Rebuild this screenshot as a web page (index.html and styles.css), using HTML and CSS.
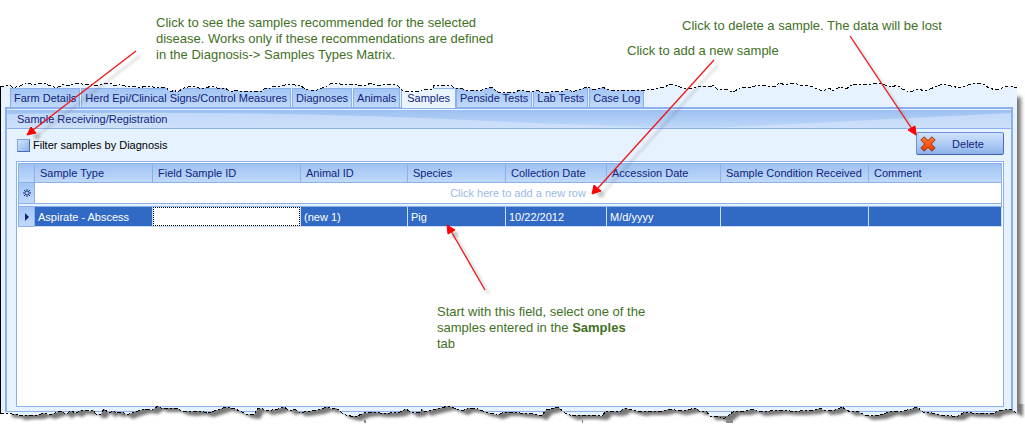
FILE: index.html
```html
<!DOCTYPE html>
<html lang="en">
<head>
<meta charset="utf-8">
<title>Samples</title>
<link rel="stylesheet" href="styles.css">
</head>
<body>
<main class="page">
  <section class="window">
    <nav class="tabs">
      <button class="tab" type="button">Farm Details</button>
      <button class="tab" type="button">Herd Epi/Clinical Signs/Control Measures</button>
      <button class="tab" type="button">Diagnoses</button>
      <button class="tab" type="button">Animals</button>
      <button class="tab tab-active" type="button">Samples</button>
      <button class="tab" type="button">Penside Tests</button>
      <button class="tab" type="button">Lab Tests</button>
      <button class="tab" type="button">Case Log</button>
    </nav>
    <div class="panel">
      <header class="panel-title">
        <svg class="swoosh" viewBox="0 0 1000 18" preserveAspectRatio="none" aria-hidden="true">
          <path d="M0 4Q250 0 460 10T720 17L1000 3V18H0Z" fill="#d7e6fb" opacity=".6"/>
        </svg>
        <h1 class="panel-heading">Sample Receiving/Registration</h1>
      </header>
      <div class="toolbar">
        <label class="filter"><input class="filter-box" type="checkbox">Filter samples by Diagnosis</label>
        <button class="delete" type="button">
          <svg class="delete-icon" viewBox="0 0 16 16" aria-hidden="true">
            <defs><linearGradient id="cross" x2="0" y2="1"><stop offset="0" stop-color="#ff7a2a"/><stop offset="1" stop-color="#ee3a00"/></linearGradient></defs>
            <path d="M4 .8L.8 4L4.600 8L.8 12L4 15.200L8 11.500L12 15.200L15.200 12L11.400 8L15.200 4L12 .8L8 4.500Z" fill="url(#cross)" stroke="#8e3519" stroke-width="1" stroke-linejoin="round"/>
          </svg>
          <span class="delete-label">Delete</span>
        </button>
      </div>
      <div class="grid">
        <table class="samples">
          <colgroup><col class="c-mark"><col class="c-type"><col class="c-field"><col class="c-animal"><col class="c-species"><col class="c-collected"><col class="c-accession"><col class="c-condition"><col class="c-comment"></colgroup>
          <thead>
            <tr><th></th><th>Sample Type</th><th>Field Sample ID</th><th>Animal ID</th><th>Species</th><th>Collection Date</th><th>Accession Date</th><th>Sample Condition Received</th><th>Comment</th></tr>
          </thead>
          <tbody>
            <tr class="new-row">
              <td class="mark"><svg class="mark-icon" viewBox="0 0 8 8" aria-hidden="true"><path d="M4 0V3M4 5V8M0 4H3M5 4H8M1 1L3 3M7 1L5 3M1 7L3 5M7 7L5 5" stroke="#10247b"/></svg></td>
              <td class="hint" colspan="8">Click here to add a new row</td>
            </tr>
            <tr class="divider"><td colspan="9"></td></tr>
            <tr class="selected">
              <td class="mark"><svg class="mark-icon" viewBox="0 0 8 8" aria-hidden="true"><path d="M2 0L6 4L2 8Z" fill="#10247b"/></svg></td>
              <td>Aspirate - Abscess</td>
              <td class="edit"><input class="edit-box" type="text" aria-label="Field Sample ID"></td>
              <td>(new 1)</td><td>Pig</td><td>10/22/2012</td><td>M/d/yyyy</td><td></td><td></td>
            </tr>
          </tbody>
        </table>
      </div>
    </div>
  </section>

  <svg class="tear tear-top" viewBox="0 80 1025 16" preserveAspectRatio="none" aria-hidden="true">
    <path fill="#fff" d="M0 80V86L6 86 10 85 12 87 16 87 20 86 27 83 31 84 35 85 40 83 44 83 48 85 54 87 58 87 61 86 64 84 68 86 74 84 80 83 84 85 92 84 97 86 102 84 106 83 110 83 115 86 120 84 125 86 130 86 136 87 140 88 145 86 150 86 156 88 160 87 165 87 171 92 174 90 177 92 184 88 188 87 195 86 199 88 205 88 212 86 217 88 225 88 231 92 234 90 240 91 262 91 265 88 270 88 275 86 280 86 285 85 290 84 295 85 300 85 305 89 311 90 317 90 325 87 330 84 336 83 340 84 345 85 355 84 360 86 366 85 371 83 375 85 382 85 393 84 398 86 403 91 413 92 420 91 424 89 433 89 434 85 443 86 450 85 455 88 460 88 468 91 475 90 480 91 487 88 491 87 495 90 500 93 515 92 520 90 531 92 537 90 541 92 548 93 552 91 560 92 568 89 572 92 578 90 587 87 595 90 602 87 612 91 620 90 630 90 645 90 654 89 666 87 668 84 678 86 684 89 692 88 700 86 712 87 713 85 718 90 725 89 733 92 740 88 752 87 758 85 775 87 779 83 786 85 794 83 800 85 810 86 818 89 822 91 830 88 832 91 840 87 846 89 853 84 862 85 872 84 880 83 887 86 892 87 897 85 902 89 910 92 918 89 925 91 935 87 942 84 951 86 960 88 968 85 976 83 983 84 989 88 996 90 1002 88 1008 86 1017 88H1025V80Z"/>
    <path class="tear-line" d="M0 86L6 86 10 85 12 87 16 87 20 86 27 83 31 84 35 85 40 83 44 83 48 85 54 87 58 87 61 86 64 84 68 86 74 84 80 83 84 85 92 84 97 86 102 84 106 83 110 83 115 86 120 84 125 86 130 86 136 87 140 88 145 86 150 86 156 88 160 87 165 87 171 92 174 90 177 92 184 88 188 87 195 86 199 88 205 88 212 86 217 88 225 88 231 92 234 90 240 91 262 91 265 88 270 88 275 86 280 86 285 85 290 84 295 85 300 85 305 89 311 90 317 90 325 87 330 84 336 83 340 84 345 85 355 84 360 86 366 85 371 83 375 85 382 85 393 84 398 86 403 91 413 92 420 91 424 89 433 89 434 85 443 86 450 85 455 88 460 88 468 91 475 90 480 91 487 88 491 87 495 90 500 93 515 92 520 90 531 92 537 90 541 92 548 93 552 91 560 92 568 89 572 92 578 90 587 87 595 90 602 87 612 91 620 90 630 90 645 90 654 89 666 87 668 84 678 86 684 89 692 88 700 86 712 87 713 85 718 90 725 89 733 92 740 88 752 87 758 85 775 87 779 83 786 85 794 83 800 85 810 86 818 89 822 91 830 88 832 91 840 87 846 89 853 84 862 85 872 84 880 83 887 86 892 87 897 85 902 89 910 92 918 89 925 91 935 87 942 84 951 86 960 88 968 85 976 83 983 84 989 88 996 90 1002 88 1008 86 1017 88"/>
  </svg>

  <svg class="tear tear-bottom" viewBox="0 404 1025 24" preserveAspectRatio="none" aria-hidden="true">
    <defs>
      <path id="edge" d="M0 414L8 413 12 414 16 414 19 416 28 415 38 415 44 413 49 415 61 411 66 414 71 411 76 413 81 410 90 411 93 410 96 414 101 414 104 409 109 413 113 411 117 413 122 412 127 415 134 412 145 409 152 410 158 406 161 408 176 408 182 411 190 412 200 411 208 413 217 410 226 407 235 409 240 411 246 414 254 415 258 408 263 409 266 411 272 410 278 409 284 407 290 411 295 409 299 412 304 412 310 411 318 410 327 407 332 409 336 408 342 413 346 415 355 417 364 413 374 412 380 413 390 413 400 412 406 409 412 413 420 412 422 409 425 412 432 410 440 408 449 406 454 408 462 411 468 408 478 409 485 412 490 413 497 415 505 412 514 412 520 413 535 414 541 416 546 410 558 407 565 413 572 416 580 415 590 415 602 416 606 411 616 412 621 411 625 408 632 410 640 412 646 411 655 411 662 411 670 409 680 411 686 410 696 408 699 411 706 411 710 416 718 416 723 419 728 416 734 411 745 411 753 409 759 412 770 411 780 410 790 411 800 411 815 410 820 408 825 411 835 410 842 407 850 412 857 411 867 416 880 415 892 411 900 412 911 409 917 407 923 412 932 413 940 415 952 416 958 416 965 412 972 413 985 413 993 414 998 411 1010 409 1017 413"/>
      <path id="sheet" d="M6 390V413L12 414 16 414 19 416 28 415 38 415 44 413 49 415 61 411 66 414 71 411 76 413 81 410 90 411 93 410 96 414 101 414 104 409 109 413 113 411 117 413 122 412 127 415 134 412 145 409 152 410 158 406 161 408 176 408 182 411 190 412 200 411 208 413 217 410 226 407 235 409 240 411 246 414 254 415 258 408 263 409 266 411 272 410 278 409 284 407 290 411 295 409 299 412 304 412 310 411 318 410 327 407 332 409 336 408 342 413 346 415 355 417 364 413 374 412 380 413 390 413 400 412 406 409 412 413 420 412 422 409 425 412 432 410 440 408 449 406 454 408 462 411 468 408 478 409 485 412 490 413 497 415 505 412 514 412 520 413 535 414 541 416 546 410 558 407 565 413 572 416 580 415 590 415 602 416 606 411 616 412 621 411 625 408 632 410 640 412 646 411 655 411 662 411 670 409 680 411 686 410 696 408 699 411 706 411 710 416 718 416 723 419 728 416 734 411 745 411 753 409 759 412 770 411 780 410 790 411 800 411 815 410 820 408 825 411 835 410 842 407 850 412 857 411 867 416 880 415 892 411 900 412 911 409 917 407 923 412 932 413 940 415 952 416 958 416 965 412 972 413 985 413 993 414 998 411 1010 409 1017 413V390Z"/>
      <mask id="outside" maskUnits="userSpaceOnUse" x="0" y="404" width="1025" height="24">
        <rect y="404" width="1025" height="24" fill="#fff"/>
        <use href="#sheet" fill="#000"/>
        <rect y="404" width="7" height="10" fill="#000"/>
      </mask>
      <filter id="soft" x="-5%" y="-50%" width="110%" height="200%"><feGaussianBlur stdDeviation="1.500"/></filter>
    </defs>
    <g mask="url(#outside)">
      <rect y="404" width="1025" height="24" fill="#fff"/>
      <use href="#sheet" x="6" y="4" fill="#777" filter="url(#soft)"/>
      <path d="M0 422H1025V428H0Z" fill="#fff"/>
    </g>
    <path fill="#8a8a8a" d="M364 420h2v3h-2zM582 420h1v3h-1zM726 420h7v3h-7z"/>
    <use href="#edge" class="tear-line"/>
  </svg>

  <aside class="note note-filter">
    <p class="note-text">Click to see the samples recommended for the selected disease. Works only if these recommendations are defined in the Diagnosis-&gt; Samples Types Matrix.</p>
    <svg class="arrow arrow-filter" viewBox="26 50 118 94" aria-hidden="true">
      <g class="arrow-shadow"><path d="M140 56L37 136"/><circle cx="37" cy="136" r="2"/></g>
      <path class="arrow-line" d="M136 51L33 130"/><path class="arrow-head" d="M27 135L31 127 36 133Z"/>
    </svg>
  </aside>
  <aside class="note note-add">
    <p class="note-text">Click to add a new sample</p>
    <svg class="arrow arrow-add" viewBox="590 58 132 142" aria-hidden="true">
      <g class="arrow-shadow"><path d="M718 65L602 194"/><circle cx="601" cy="194" r="2"/></g>
      <path class="arrow-line" d="M714 60L598 188"/><path class="arrow-head" d="M592 194L594 185 601 191Z"/>
    </svg>
  </aside>
  <aside class="note note-delete">
    <p class="note-text">Click to delete a sample. The data will be lost</p>
    <svg class="arrow arrow-delete" viewBox="845 34 80 108" aria-hidden="true">
      <g class="arrow-shadow"><path d="M854 41L918 136"/></g>
      <path class="arrow-line" d="M850 36L912 129"/><path class="arrow-head" d="M916 135L908 130 915 126Z"/>
    </svg>
  </aside>
  <aside class="note note-field">
    <p class="note-text">Start with this field, select one of the samples entered in the <strong>Samples</strong><br>tab</p>
    <svg class="arrow arrow-field" viewBox="444 222 52 74" aria-hidden="true">
      <g class="arrow-shadow"><path d="M489 294L455 235"/><circle cx="455" cy="235" r="2"/></g>
      <path class="arrow-line" d="M485 290L451 231"/><path class="arrow-head" d="M447 225L455 230 448 234Z"/>
    </svg>
  </aside>
</main>
</body>
</html>
```

FILE: styles.css
```css
* { box-sizing: border-box; }

body {
  margin: 0;
  background: #fff;
  font: 11px/14px "Liberation Sans", Arial, sans-serif;
  color: #10247b;
}

button, input { font: inherit; color: inherit; }

.page {
  position: relative;
  display: flex;
  flex-direction: column;
  min-height: 100vh;
  padding: 80px 8px 12px 0;
  overflow: hidden;
}

.window {
  flex: 1;
  display: flex;
  flex-direction: column;
  padding: 8px 4px 4px 4px;
  border-left: 1px solid #000;
  background: #e6f2ff;
  box-shadow: 5px 16px 4px -1px #777;
}

.tabs {
  display: flex;
  padding-left: 5px;
}

.tab {
  height: 19px;
  margin-right: 1px;
  padding: 0 3px;
  border: 1px solid #8bb0ea;
  border-bottom: 0;
  background: linear-gradient(#a3c5f4, #c0d9fa);
  white-space: nowrap;
}

.tab-active {
  margin: 0 0 -1px;
  height: 20px;
  padding: 0 5px 2px;
  background: #eaf4ff;
  position: relative;
}

.panel {
  flex: 1;
  display: flex;
  flex-direction: column;
  border: 2px solid #8bb0ec;
  border-bottom-width: 1px;
  padding-top: 1px;
  background: #e6f2ff;
}

.panel-title {
  display: grid;
  height: 19px;
  border-bottom: 1px solid #8bb0ea;
  background: linear-gradient(#9cc0f1, #bfd8f9);
}

.swoosh, .panel-heading { grid-area: 1 / 1; }
.swoosh { width: 100%; height: 18px; }

.panel-heading {
  margin: 0;
  padding: 2px 10px;
  font-size: 11px;
  font-weight: normal;
}

.toolbar {
  display: flex;
  align-items: center;
  justify-content: space-between;
  padding: 3px 7px 6px 10px;
}

.filter {
  display: flex;
  align-items: center;
  gap: 3px;
  padding-top: 3px;
  color: #000;
}

.filter-box {
  appearance: none;
  width: 13px;
  height: 13px;
  margin: 0;
  border: 1px solid;
  border-color: #83a7dc #4b6cb0 #4b6cb0 #83a7dc;
  background: linear-gradient(135deg, #cfe5ff, #8fb4ea);
}

.delete {
  display: flex;
  align-items: center;
  width: 88px;
  height: 23px;
  padding: 0 3px;
  border: 1px solid #6c90d2;
  border-bottom-color: #3f62ad;
  border-right-color: #4c6fb8;
  border-radius: 2px;
  background: linear-gradient(#cfe2fb, #a9c8f4 60%, #8db2ea);
}

.delete-icon { width: 16px; height: 16px; }
.delete-label { flex: 1; text-align: center; }

.grid {
  flex: 1;
  margin: 0 7px 4px 9px;
  padding: 1px;
  border: 1px solid #8bb0ea;
  background: #fff;
}

.samples {
  width: 100%;
  table-layout: fixed;
  border-collapse: separate;
  border-spacing: 0;
  border-left: 1px solid #8bb0ea;
}

.c-mark { width: 16px; }
.c-type { width: 118px; }
.c-field { width: 148px; }
.c-animal { width: 107px; }
.c-species { width: 98px; }
.c-collected { width: 101px; }
.c-accession { width: 114px; }
.c-condition { width: 148px; }
.c-comment { width: 133px; }

.samples th {
  height: 20px;
  padding: 0 5px;
  border: solid #8bb0ea;
  border-width: 1px 1px 1px 0;
  background: linear-gradient(#9fc2f2, #c0d9fa);
  font-weight: normal;
  text-align: left;
  white-space: nowrap;
}

.samples td { padding: 0 3px; white-space: nowrap; }

.samples .mark {
  height: 20px;
  padding: 0;
  border-right: 1px solid #8bb0ea;
  border-bottom: 1px solid #8bb0ea;
  background: linear-gradient(#a3c5f4, #c0d9fa);
  text-align: center;
}

.mark-icon { display: block; width: 8px; height: 8px; margin: 0 auto; }

.samples .hint {
  height: 21px;
  border-right: 1px solid #8bb0ea;
  border-bottom: 1px solid #8bb0ea;
  color: #9cb9e8;
  text-align: center;
}

.samples .divider td {
  height: 3px;
  padding: 0;
  border: solid #8bb0ea;
  border-width: 0 1px 1px 0;
  background: #e6f2ff;
}

.selected td {
  height: 20px;
  border-right: 1px solid #c9dcf8;
  border-bottom: 1px solid #c9dcf8;
  background: #316ac5;
  color: #fff;
}

.samples .edit { padding: 0; }

.edit-box {
  display: block;
  width: 100%;
  height: 19px;
  padding: 0 3px;
  border: 1px dotted #000;
  border-radius: 0;
  background: #fff;
  color: #000;
}

.tear {
  position: absolute;
  left: 0;
  width: 100%;
  pointer-events: none;
}

.tear-top { top: 80px; height: 16px; }
.tear-bottom { bottom: 0; height: 24px; }

.tear-line {
  fill: none;
  stroke: #000;
  stroke-width: 1;
  stroke-dasharray: 4 2 2 2;
  shape-rendering: crispEdges;
}

.note {
  position: absolute;
  color: #42701f;
  font-size: 13px;
  line-height: 16px;
  pointer-events: none;
}

.note-text { margin: 0; }
.note-filter { left: 156px; top: 15px; width: 340px; }
.note-add { left: 627px; top: 43px; white-space: nowrap; }
.note-delete { right: 83px; top: 18px; white-space: nowrap; }
.note-field { left: 437px; top: 304px; width: 220px; }

.arrow { position: absolute; overflow: visible; }
.arrow-filter { left: -130px; top: 35px; width: 118px; height: 94px; }
.arrow-add { left: -37px; top: 15px; width: 132px; height: 142px; }
.arrow-delete { right: 17px; top: 16px; width: 80px; height: 108px; }
.arrow-field { left: 7px; top: -82px; width: 52px; height: 74px; }

.arrow-line { fill: none; stroke: #f01414; stroke-width: 1.3; }
.arrow-head { fill: #f00; stroke: #f00; stroke-width: 1; }

.arrow-shadow {
  fill: #555;
  stroke: #555;
  stroke-width: 3;
  opacity: .3;
  filter: blur(1px);
}
.arrow-shadow path { fill: none; opacity: .5; }
```
